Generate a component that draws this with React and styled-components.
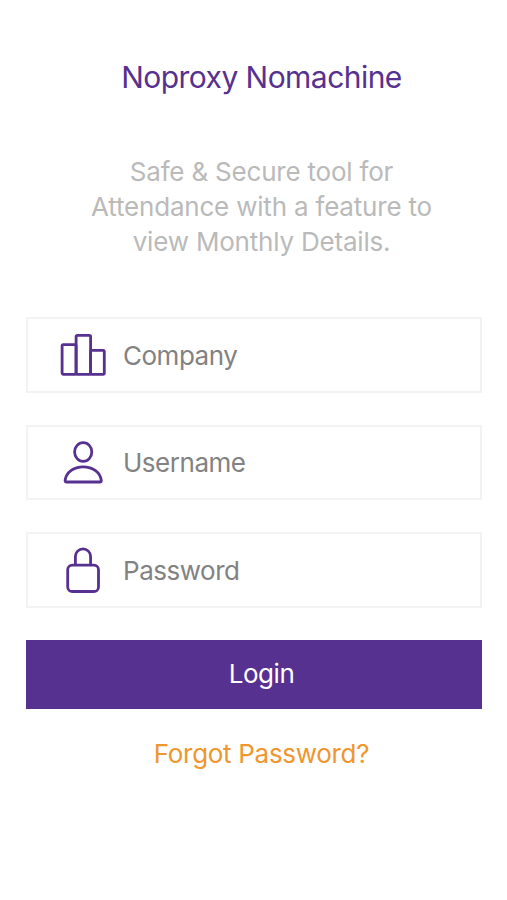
import React, { useState } from 'react';
import styled, { createGlobalStyle, ThemeProvider } from 'styled-components';

const theme = {
  purple: '#57318f',
  orange: '#f0962e',
  lightGrey: '#bababa',
  grey: '#828282',
  border: '#f3f3f3',
};

const GlobalStyle = createGlobalStyle`
  *,
  *::before,
  *::after {
    box-sizing: border-box;
  }
  body {
    margin: 0;
    background: white;
    font-family: Inter, 'Liberation Sans', sans-serif;
  }
`;

const Page = styled.main`
  min-height: 900px;
  padding: 57px 25px 0 26px;
`;
const Header = styled.header`
  padding-left: 15px;
  text-align: center;
`;
const Title = styled.h1`
  margin: 0;
  font-size: 30px;
  font-weight: 400;
  line-height: 40px;
  letter-spacing: -0.54px;
  color: ${({ theme }) => theme.purple};
`;
const Description = styled.p`
  width: 360px;
  margin: 57px auto 0;
  font-size: 26px;
  line-height: 35px;
  letter-spacing: -0.2px;
  color: ${({ theme }) => theme.lightGrey};
`;
const LoginForm = styled.form`
  display: flex;
  flex-direction: column;
  gap: 32px;
  margin-top: 58px;
`;
const Field = styled.label`
  display: flex;
  align-items: center;
  height: 75.5px;
  padding-left: 31px;
  border: 2px solid ${({ theme }) => theme.border};
`;
const Icon = styled.svg`
  flex: none;
  width: 48px;
  height: 48px;
  margin-right: 16px;
  fill: none;
  stroke: ${({ theme }) => theme.purple};
  stroke-width: 2.8;
  stroke-linejoin: round;
`;
const Input = styled.input`
  flex: 1;
  min-width: 0;
  padding: 2px 0 0;
  border: none;
  outline: none;
  background: none;
  font: inherit;
  font-size: 26px;
  line-height: 36px;
  letter-spacing: -0.48px;
  color: ${({ theme }) => theme.grey};
  &::placeholder {
    color: ${({ theme }) => theme.grey};
    opacity: 1;
  }
`;
const LoginButton = styled.button`
  height: 69px;
  padding: 0 0 2px 15px;
  border: none;
  background: ${({ theme }) => theme.purple};
  font: inherit;
  font-size: 26px;
  letter-spacing: -0.45px;
  color: white;
  cursor: pointer;
`;
const ForgotLink = styled.a`
  display: block;
  margin-top: 27px;
  padding-left: 15px;
  font-size: 26px;
  line-height: 36px;
  letter-spacing: -0.3px;
  text-align: center;
  text-decoration: none;
  color: ${({ theme }) => theme.orange};
`;

const CompanyIcon = () => (
  <Icon viewBox="0 0 48 48">
    <rect x="3.1" y="13.6" width="14" height="29.7" rx="1.2" />
    <rect x="17.1" y="4.3" width="14.5" height="39" rx="1.2" />
    <rect x="31.6" y="19.4" width="13.7" height="23.9" rx="1.2" />
  </Icon>
);

const UserIcon = () => (
  <Icon viewBox="0 0 48 48">
    <ellipse cx="24.2" cy="14" rx="8.6" ry="9.3" />
    <path d="M7.6 44h33.2q1.5 0 1.5-1.5C41.4 34.5 33.8 28.8 24.2 28.8S7 34.5 6.1 42.5q0 1.5 1.5 1.5z" />
  </Icon>
);

const LockIcon = () => (
  <Icon viewBox="0 0 48 48">
    <path d="M16.4 19v-8.5a7.6 7.6 0 0 1 15.2 0V19" />
    <rect x="8.7" y="19.1" width="30.8" height="26.4" rx="4.6" />
  </Icon>
);

const fields = [
  { name: 'company', label: 'Company', type: 'text', icon: <CompanyIcon /> },
  { name: 'username', label: 'Username', type: 'text', icon: <UserIcon /> },
  { name: 'password', label: 'Password', type: 'password', icon: <LockIcon /> },
];

const App = () => {
  const [values, setValues] = useState({ company: '', username: '', password: '' });

  const handleChange = ({ target }) => setValues({ ...values, [target.name]: target.value });

  return (
    <ThemeProvider theme={theme}>
      <GlobalStyle />
      <Page>
        <Header>
          <Title>Noproxy Nomachine</Title>
          <Description>Safe &amp; Secure tool for Attendance with a feature to view Monthly Details.</Description>
        </Header>
        <LoginForm onSubmit={e => e.preventDefault()}>
          {fields.map(({ name, label, type, icon }) => (
            <Field key={name}>
              {icon}
              <Input
                name={name}
                type={type}
                placeholder={label}
                value={values[name]}
                onChange={handleChange}
              />
            </Field>
          ))}
          <LoginButton type="submit">Login</LoginButton>
        </LoginForm>
        <ForgotLink href="#">Forgot Password?</ForgotLink>
      </Page>
    </ThemeProvider>
  );
};

export default App;
